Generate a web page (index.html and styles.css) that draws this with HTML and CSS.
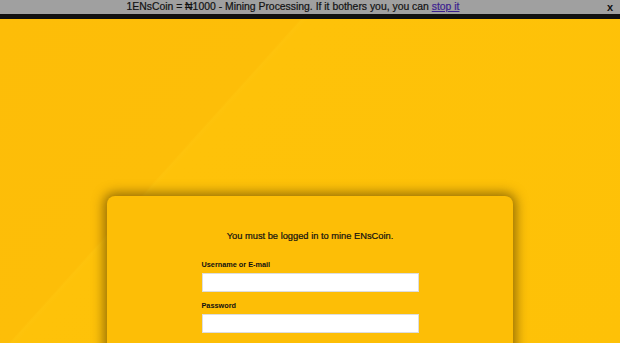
FILE: index.html
```html
<!DOCTYPE html>
<html lang="en">

<head>
  <meta charset="UTF-8" />
  <meta name="viewport" content="width=device-width, initial-scale=1.0" />
  <title>ENsCoin - Mining</title>
  <link rel="stylesheet" href="styles.css">
</head>

<body>
  <div class="notice">
    <p>1ENsCoin = ₦1000 - Mining Processing. If it bothers you, you can <a href="#">stop it</a></p>
    <button class="close">x</button>
  </div>
  <div class="page">
    <div class="login-box">
      <p class="login-msg">You must be logged in to mine ENsCoin.</p>
      <form class="login-form">
        <label for="user">Username or E-mail</label>
        <input type="text" id="user" />
        <label for="pass">Password</label>
        <input type="password" id="pass" />
      </form>
    </div>
  </div>
</body>

</html>
```

FILE: styles.css
```css
* {
  box-sizing: border-box;
}

html,
body {
  margin: 0;
  height: 100%;
}

body {
  font-family: "Liberation Sans", Arial, sans-serif;
  background: #fec107;
  overflow: hidden;
}

.notice {
  height: 19px;
  background: #a0a0a0;
  border-bottom: 5px solid #111;
  padding-right: 34px;
  display: flex;
  align-items: center;
  justify-content: center;
  position: relative;
}

.notice p {
  margin: 0;
  font-size: 10.4px;
  color: #111;
  line-height: 14px;
  -webkit-text-stroke: 0.2px #111;
}

.notice a {
  color: #3b1d8f;
  -webkit-text-stroke: 0.2px #3b1d8f;
}

.notice .close {
  position: absolute;
  right: 7px;
  top: 0;
  height: 14px;
  padding: 0;
  border: none;
  background: none;
  font-family: inherit;
  font-size: 11px;
  font-weight: bold;
  color: #111;
  cursor: pointer;
}

.page {
  height: calc(100% - 19px);
  background: linear-gradient(132deg, #fdbd08 0px, #fdbe08 223px, #fec30c 225px, #fec209 229px, #fec107 100%);
  padding-top: 177px;
}

.login-box {
  width: 406px;
  margin: 0 auto;
  background: #fdbe06;
  border-radius: 8px;
  box-shadow: 0 0 12px 3px rgba(60, 40, 0, 0.55);
  padding: 35px 0 40px;
}

.login-msg {
  margin: 0 0 19px;
  text-align: center;
  font-size: 9.3px;
  color: #111;
  -webkit-text-stroke: 0.2px #111;
}

.login-form {
  width: 217px;
  margin: 0 auto;
  display: flex;
  flex-direction: column;
}

.login-form label {
  font-size: 7.3px;
  font-weight: bold;
  color: #111;
  margin-bottom: 4px;
}

.login-form input {
  height: 19px;
  border: 1px solid #ddd;
  background: #fff;
  margin-bottom: 9px;
}
```
